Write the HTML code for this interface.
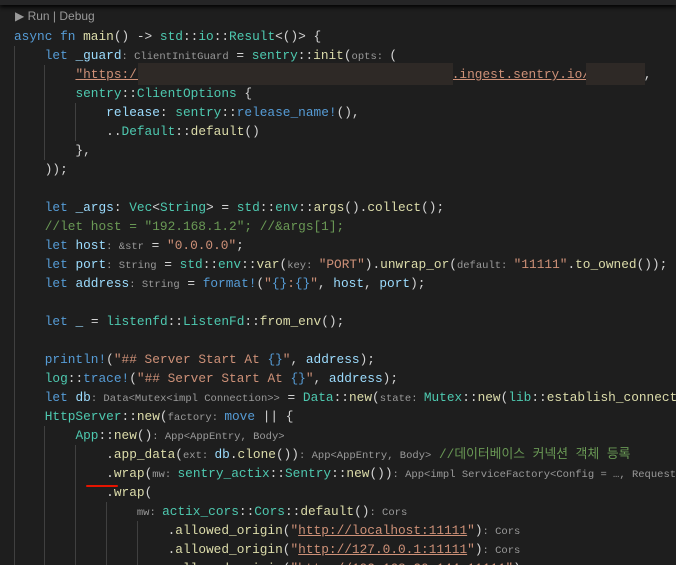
<!DOCTYPE html>
<html><head><meta charset="utf-8"><style>
html,body{margin:0;padding:0;background:#1e1e1e;width:676px;height:565px;overflow:hidden;position:relative}
.top{position:absolute;left:0;top:0;width:676px;height:5px;background:#252526;box-shadow:0 2px 4px #000}
.l{position:absolute;left:14px;height:19px;line-height:19px;white-space:pre;font-family:"Liberation Mono",monospace;font-size:12.8px;color:#d4d4d4}
.k{color:#569cd6}.f{color:#dcdcaa}.t{color:#4ec9b0}.v{color:#9cdcfe}.s{color:#ce9178}.c{color:#6a9955}.m{color:#4fc1ff}
.h{color:#9a9a9a;font-size:10.5px;font-family:"Liberation Mono",monospace;white-space:pre}
.u{text-decoration:underline;text-decoration-color:#ce9178}
.g{position:absolute;width:1px;background:#404040}
.r{position:absolute;background:#2e2926}
.run{position:absolute;left:15px;top:9px;font:12px "Liberation Sans",sans-serif;color:#999}
</style></head><body>
<div class="top"></div>
<div class="run">▶ Run | Debug</div>
<div class="g" style="left:14px;top:46px;height:520px"></div>
<div class="g" style="left:44px;top:65px;height:95px"></div>
<div class="g" style="left:75px;top:103px;height:38px"></div>
<div class="g" style="left:44px;top:426px;height:140px"></div>
<div class="g" style="left:75px;top:445px;height:121px"></div>
<div class="g" style="left:106px;top:502px;height:64px"></div>
<div class="g" style="left:137px;top:521px;height:45px"></div>
<div class="l" style="top:27px"><span class="k">async fn</span> <span class="f">main</span>() -&gt; <span class="t">std</span>::<span class="t">io</span>::<span class="t">Result</span>&lt;()&gt; {</div>
<div class="l" style="top:46px">    <span class="k">let</span> <span class="v">_guard</span><span class="h">: ClientInitGuard</span> = <span class="t">sentry</span>::<span class="f">init</span>(<span class="h">opts: </span>(</div>
<div class="l" style="top:65px">        <span class="s u">"https:/                                         .ingest.sentry.io/      </span><span class="s">"</span>,</div>
<div class="r" style="left:138px;top:63px;width:315px;height:22px"></div>
<div class="r" style="left:586px;top:63px;width:59px;height:22px"></div>
<div class="l" style="top:84px">        <span class="t">sentry</span>::<span class="t">ClientOptions</span> {</div>
<div class="l" style="top:103px">            <span class="v">release</span>: <span class="t">sentry</span>::<span class="k">release_name!</span>(),</div>
<div class="l" style="top:122px">            ..<span class="t">Default</span>::<span class="f">default</span>()</div>
<div class="l" style="top:141px">        },</div>
<div class="l" style="top:160px">    ));</div>
<div class="l" style="top:198px">    <span class="k">let</span> <span class="v">_args</span>: <span class="t">Vec</span>&lt;<span class="t">String</span>&gt; = <span class="t">std</span>::<span class="t">env</span>::<span class="f">args</span>().<span class="f">collect</span>();</div>
<div class="l" style="top:217px">    <span class="c">//let host = "192.168.1.2"; //&amp;args[1];</span></div>
<div class="l" style="top:236px">    <span class="k">let</span> <span class="v">host</span><span class="h">: &amp;str</span> = <span class="s">"0.0.0.0"</span>;</div>
<div class="l" style="top:255px">    <span class="k">let</span> <span class="v">port</span><span class="h">: String</span> = <span class="t">std</span>::<span class="t">env</span>::<span class="f">var</span>(<span class="h">key: </span><span class="s">"PORT"</span>).<span class="f">unwrap_or</span>(<span class="h">default: </span><span class="s">"11111"</span>.<span class="f">to_owned</span>());</div>
<div class="l" style="top:274px">    <span class="k">let</span> <span class="v">address</span><span class="h">: String</span> = <span class="k">format!</span>(<span class="s">"</span><span class="k">{}</span><span class="s">:</span><span class="k">{}</span><span class="s">"</span>, <span class="v">host</span>, <span class="v">port</span>);</div>
<div class="l" style="top:312px">    <span class="k">let</span> <span class="v">_</span> = <span class="t">listenfd</span>::<span class="t">ListenFd</span>::<span class="f">from_env</span>();</div>
<div class="l" style="top:350px">    <span class="k">println!</span>(<span class="s">"## Server Start At </span><span class="k">{}</span><span class="s">"</span>, <span class="v">address</span>);</div>
<div class="l" style="top:369px">    <span class="t">log</span>::<span class="k">trace!</span>(<span class="s">"## Server Start At </span><span class="k">{}</span><span class="s">"</span>, <span class="v">address</span>);</div>
<div class="l" style="top:388px">    <span class="k">let</span> <span class="v">db</span><span class="h">: Data&lt;Mutex&lt;impl Connection&gt;&gt;</span> = <span class="t">Data</span>::<span class="f">new</span>(<span class="h">state: </span><span class="t">Mutex</span>::<span class="f">new</span>(<span class="t">lib</span>::<span class="f">establish_connect</span></div>
<div class="l" style="top:407px">    <span class="t">HttpServer</span>::<span class="f">new</span>(<span class="h">factory: </span><span class="k">move</span> || {</div>
<div class="l" style="top:426px">        <span class="t">App</span>::<span class="f">new</span>()<span class="h">: App&lt;AppEntry, Body&gt;</span></div>
<div class="l" style="top:445px">            .<span class="f">app_data</span>(<span class="h">ext: </span><span class="v">db</span>.<span class="f">clone</span>())<span class="h">: App&lt;AppEntry, Body&gt;</span> <span class="c" style="font-family:'Liberation Mono','Noto Sans CJK KR',monospace">//데이터베이스 커넥션 객체 등록</span></div>
<div class="l" style="top:464px">            .<span class="f">wrap</span>(<span class="h">mw: </span><span class="t">sentry_actix</span>::<span class="t">Sentry</span>::<span class="f">new</span>())<span class="h">: App&lt;impl ServiceFactory&lt;Config = …, Request</span></div>
<div style="position:absolute;left:86px;top:485px;width:32px;height:2px;background:#e51400;border-radius:1px"></div>
<div class="l" style="top:483px">            .<span class="f">wrap</span>(</div>
<div class="l" style="top:502px">                <span class="h">mw: </span><span class="t">actix_cors</span>::<span class="t">Cors</span>::<span class="f">default</span>()<span class="h">: Cors</span></div>
<div class="l" style="top:521px">                    .<span class="f">allowed_origin</span>(<span class="s">"<span class="u">http://localhost:11111</span>"</span>)<span class="h">: Cors</span></div>
<div class="l" style="top:540px">                    .<span class="f">allowed_origin</span>(<span class="s">"<span class="u">http://127.0.0.1:11111</span>"</span>)<span class="h">: Cors</span></div>
<div class="l" style="top:559px">                    .<span class="f">allowed_origin</span>(<span class="s">"<span class="u">http://192.168.20.144:11111</span>"</span>)</div>
</body></html>
